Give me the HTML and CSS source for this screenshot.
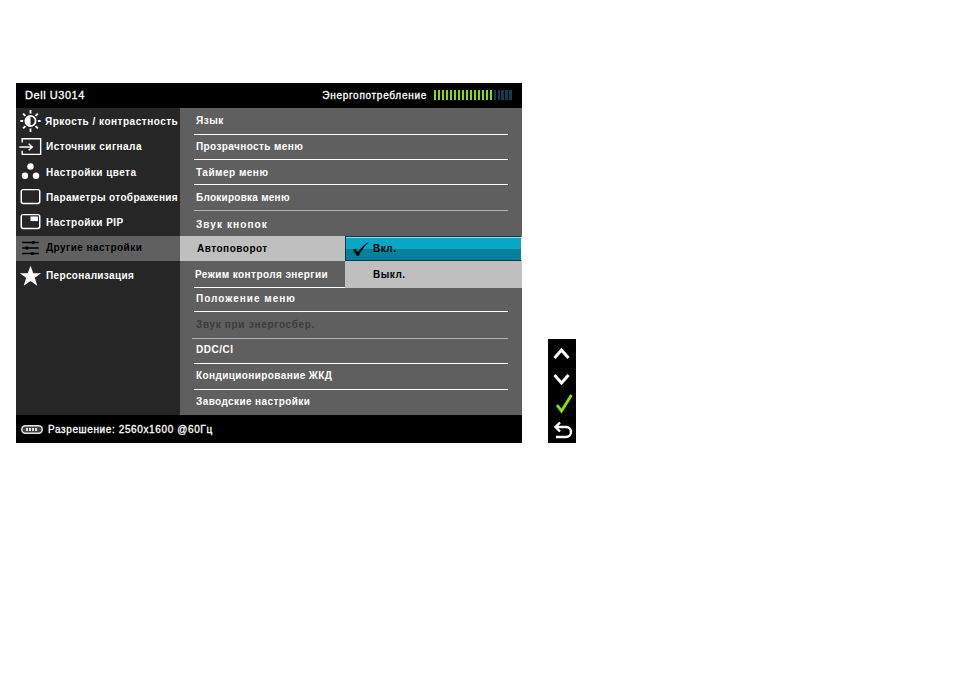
FILE: index.html
```html
<!DOCTYPE html>
<html lang="ru">
<head>
<meta charset="utf-8">
<title>Dell U3014</title>
<link rel="stylesheet" href="styles.css">
</head>
<body>
<div class="page">
  <section class="osd">
    <header class="head">
      <span class="model">Dell U3014</span>
      <div class="energy">
        <span class="energy-label">Энергопотребление</span>
        <div class="bars">
          <i class="on"></i><i class="on"></i><i class="on"></i><i class="on"></i><i class="on"></i>
          <i class="on"></i><i class="on"></i><i class="on"></i><i class="on"></i><i class="on"></i>
          <i class="on"></i><i class="on"></i><i class="on"></i><i class="on"></i><i class="on"></i>
          <i></i><i></i><i></i><i></i><i></i>
        </div>
      </div>
    </header>
    <div class="body">
      <nav class="side">
        <div class="side-item">
          <svg class="ico" viewBox="0 0 26 26"><g fill="none" stroke="#fff" stroke-width="2"><path d="M13 1v4M13 21v4M2 13h3M21 13h3M5 5l2.500 2.500M21 5l-2.500 2.500M5 21l2.500-2.500M21 21l-2.500-2.500"/><circle cx="13" cy="13" r="5.500"/></g><path d="M13 7a6 6 0 0 0 0 12z" fill="#fff"/></svg>
          <span class="ls-bright">Яркость / контрастность</span>
        </div>
        <div class="side-item">
          <svg class="ico" viewBox="0 0 26 26"><g fill="none" stroke="#fff" stroke-width="1.500"><path d="M4 8V4h20v17H4v-4"/><path d="M1 13h14M11 9.500l4 3.500-4 3.500"/></g></svg>
          <span>Источник сигнала</span>
        </div>
        <div class="side-item">
          <svg class="ico" viewBox="0 0 26 26"><g fill="#fff"><circle cx="13" cy="7" r="3.500"/><circle cx="7" cy="17" r="3.500"/><circle cx="19" cy="17" r="3.500"/></g></svg>
          <span>Настройки цвета</span>
        </div>
        <div class="side-item">
          <svg class="ico" viewBox="0 0 26 26"><rect x="3" y="5" width="20" height="15" rx="2" fill="none" stroke="#fff" stroke-width="1.600"/></svg>
          <span class="ls-params">Параметры отображения</span>
        </div>
        <div class="side-item side-pip">
          <svg class="ico" viewBox="0 0 26 26"><rect x="3" y="5" width="20" height="15" rx="2" fill="none" stroke="#fff" stroke-width="1.600"/><rect x="13" y="7" width="8" height="5" fill="#fff"/></svg>
          <span>Настройки PIP</span>
        </div>
        <div class="side-item side-active">
          <svg class="ico" viewBox="0 0 26 26"><g stroke="#000" stroke-width="1.500"><path d="M4 7h18M4 13h18M4 19h18"/></g><g stroke="#000" stroke-width="3"><path d="M16 5.500v3M9 11.500v3M15 17.500v3"/></g></svg>
          <span>Другие настройки</span>
        </div>
        <div class="side-item side-last">
          <svg class="ico" viewBox="0 0 26 26"><path d="M13 2l3 8h8.500l-6.800 5 2.600 8.500L13 18.500l-7.300 5 2.600-8.500-6.800-5H10z" fill="#fff"/></svg>
          <span class="ls-pers">Персонализация</span>
        </div>
      </nav>
      <div class="main">
        <div class="row">Язык</div>
        <div class="row ls-4">Прозрачность меню</div>
        <div class="row low">Таймер меню</div>
        <div class="row row-grey low ls-25">Блокировка меню</div>
        <div class="row row-plain lower ls-11">Звук кнопок</div>
        <div class="row row-selected">Автоповорот</div>
        <div class="row row-left low ls-45">Режим контроля энергии</div>
        <div class="row ls-1">Положение меню</div>
        <div class="row row-off ls-65">Звук при энергосбер.</div>
        <div class="row high">DDC/CI</div>
        <div class="row ls-4">Кондиционирование ЖКД</div>
        <div class="row row-plain ls-4">Заводские настройки</div>
        <div class="options">
          <div class="opt opt-on">
            <svg class="tick" viewBox="0 0 18 16"><path d="M1 9l2.500-1.500 2.500 4C9 6.500 12.500 3 17 1 12.500 5 9 10 6.500 15H5z" fill="#000"/></svg>
            <span>Вкл.</span>
          </div>
          <div class="opt opt-off"><span>Выкл.</span></div>
        </div>
      </div>
    </div>
    <footer class="foot">
      <svg class="port" viewBox="0 0 22 9"><rect x="0.750" y="0.750" width="20.500" height="7.500" rx="3.750" fill="#444" stroke="#e4e4e4" stroke-width="1.500"/><path d="M5 4.500h12" stroke="#ddd" stroke-width="3" stroke-dasharray="2 1"/></svg>
      <span>Разрешение: 2560x1600 @60Гц</span>
    </footer>
  </section>
  <aside class="keys">
    <svg class="key" viewBox="0 0 28 26"><path d="M6.500 19l7-8 7 8" fill="none" stroke="#fff" stroke-width="3"/></svg>
    <svg class="key" viewBox="0 0 28 26"><path d="M6.500 10l7 8 7-8" fill="none" stroke="#fff" stroke-width="3"/></svg>
    <svg class="key" viewBox="0 0 28 26"><path d="M9 14l4.500 6L23.500 4" fill="none" stroke="#8fe000" stroke-width="2.800"/></svg>
    <svg class="key" viewBox="0 0 28 26"><path d="M8 10h10a4.500 4.500 0 0 1 0 10H8M12 5.500L7.500 10l4.500 4.500" fill="none" stroke="#fff" stroke-width="2.400"/></svg>
  </aside>
</div>
</body>
</html>
```
FILE: styles.css
```css
* { box-sizing: border-box; }
html, body { margin: 0; padding: 0; background: #fff; }
body { font-family: "Liberation Sans", Arial, sans-serif; font-size: 10px; font-weight: 700; color: #fff; }
.page { display: flex; align-items: flex-end; gap: 26px; padding: 83px 0 0 16px; }

.osd { width: 506px; height: 360px; display: flex; flex-direction: column; background: #000; }
.head { height: 25px; display: flex; justify-content: space-between; align-items: center; padding: 0 10px 1px 9px; }
.model { font-size: 11px; letter-spacing: 0.55px; font-weight: 400; -webkit-text-stroke: 0.3px #fff; }
.energy { display: flex; align-items: center; gap: 7px; }
.energy-label { font-size: 10px; font-weight: 400; -webkit-text-stroke: 0.3px #fff; letter-spacing: 0.72px; }
.bars { display: flex; width: 78px; height: 10px; justify-content: space-between; }
.bars i { width: 2.400px; background: #123b58; }
.bars i.on { background: #8fd800; }

.body { flex: 1; display: flex; min-height: 0; }
.side { width: 164px; display: grid; grid-template-rows: 26px 25px 26px 24px 27px 25px 27px 1fr; background: #262626; }
.side-item { display: flex; align-items: center; gap: 3px; padding-left: 2px; white-space: nowrap; letter-spacing: 0.46px; overflow: hidden; }
.ls-bright { letter-spacing: 0.5px; margin-left: -1px; }
.ls-params { letter-spacing: 0.35px; }
.ls-pers { letter-spacing: 0.36px; }
.side-pip { padding-bottom: 1px; }
.side-active { background: #606060; color: #000; padding-bottom: 2px; }
.side-last { padding-top: 2px; }
.ico { width: 25px; height: 24px; flex: none; }

.main { flex: 1; position: relative; display: grid; grid-template-rows: 26px 25px 25px 26px 26px 25px 26px 24px 27px 25px 26px 26px; background: #5f5f5f; }
.row { position: relative; display: flex; align-items: center; padding: 0 0 1px 16px; letter-spacing: 0.5px; }
.row::after { content: ""; position: absolute; left: 14px; right: 14px; bottom: -1px; height: 1px; background: #fff; }
.row-plain::after { display: none; }
.row-grey::after { background: #b4b4b4; }
.row-off { color: #3c3c3c; }
.row-off::after { left: 12px; background: #b4b4b4; }
.row-selected { background: #bfbfbf; color: #000; width: 165px; padding-left: 17px; }
.row-selected::after { display: none; }
.row-left { padding-left: 15px; }
.row-left::after { right: 177px; }
.low { padding-top: 1px; padding-bottom: 0; }
.lower { padding-top: 3px; padding-bottom: 0; }
.high { padding-bottom: 3px; }
.ls-25 { letter-spacing: 0.25px; }
.ls-4 { letter-spacing: 0.4px; }
.ls-45 { letter-spacing: 0.42px; }
.ls-65 { letter-spacing: 0.65px; }
.ls-1 { letter-spacing: 1px; }
.ls-11 { letter-spacing: 1.1px; }

.options { position: absolute; left: 165px; right: 0; top: 128px; }
.opt { display: flex; align-items: center; padding-left: 28px; letter-spacing: 0.5px; color: #000; }
.opt-on { height: 25px; padding-left: 6px; gap: 3px; border: 1px solid #0b3a46; border-right-color: #fff; box-shadow: inset 0 1px 0 #8fdcea; background: linear-gradient(#0aa6c6 0 52%, #07819b 52% 100%); }
.opt-off { height: 27px; background: #bfbfbf; }
.tick { width: 18px; height: 16px; flex: none; }

.foot { height: 28px; display: flex; align-items: center; gap: 5px; padding: 0 0 0 5px; }
.foot span { font-weight: 400; -webkit-text-stroke: 0.3px #fff; font-size: 10px; letter-spacing: 0.62px; }
.port { width: 22px; height: 9px; flex: none; }

.keys { width: 28px; height: 104px; display: flex; flex-direction: column; background: #000; }
.key { width: 28px; height: 26px; flex: none; display: block; }
```
